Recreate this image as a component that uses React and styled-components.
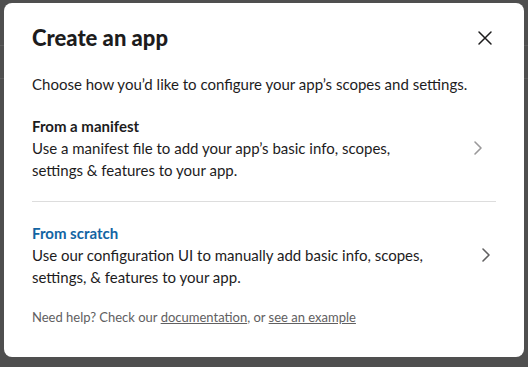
import React from "react";
import styled, { createGlobalStyle } from "styled-components";

const GlobalStyle = createGlobalStyle`
  html, body {
    margin: 0;
    padding: 0;
    background: #4f4f4f;
  }
  body {
    font-family: Lato, "Noto Sans", sans-serif;
    color: #1d1c1d;
    -webkit-font-smoothing: antialiased;
  }
`;

const Page = styled.div`
  position: relative;
  width: 528px;
  height: 367px;
  overflow: hidden;
  background: #4f4f4f;
`;

const PageBand = styled.div`
  height: ${(p) => p.h}px;
  border-bottom: 1px solid #5d5d5d;
`;

const Modal = styled.div`
  position: absolute;
  left: 4px;
  top: 3px;
  width: 520px;
  height: 354px;
  box-sizing: border-box;
  background: #fff;
  border-radius: 8px;
  padding: 20px 28px 0 28px;
  display: flex;
  flex-direction: column;
`;

const Header = styled.div`
  display: flex;
  align-items: center;
  justify-content: space-between;
`;

const Title = styled.h1`
  margin: 0;
  font-size: 22px;
  line-height: 30px;
  font-weight: 900;
  color: #1d1c1d;
`;

const CloseButton = styled.button`
  border: none;
  background: none;
  padding: 0;
  margin-right: 3px;
  width: 16px;
  height: 16px;
  display: flex;
  align-items: center;
  justify-content: center;
  color: #1d1c1d;
  cursor: pointer;
`;

const Intro = styled.p`
  margin: 20px 0 0 0;
  font-size: 15px;
  line-height: 22px;
`;

const Option = styled.div`
  display: flex;
  align-items: center;
  padding: 20px 0;
  border-bottom: ${(p) => (p.divider ? "1px solid #dddddd" : "none")};
  cursor: pointer;
`;

const OptionText = styled.div`
  flex: 1;
  font-size: 15px;
  line-height: 22px;
`;

const OptionTitle = styled.div`
  font-weight: 700;
  color: ${(p) => (p.active ? "#1264a3" : "#1d1c1d")};
`;

const Chevron = styled.div`
  width: 56px;
  display: flex;
  justify-content: flex-end;
  padding-right: ${(p) => (p.active ? 5 : 13)}px;
  box-sizing: border-box;
  color: ${(p) => (p.active ? "#616061" : "#9a999a")};
`;

const Footer = styled.p`
  margin: 0;
  font-size: 13px;
  line-height: 18px;
  color: #616061;
`;

const FooterLink = styled.a`
  color: #616061;
  text-decoration: underline;
`;

const ChevronIcon = () => (
  <svg width="10" height="16" viewBox="0 0 10 16" fill="none">
    <polyline
      points="2,2 8,8 2,14"
      stroke="currentColor"
      strokeWidth="1.6"
      strokeLinecap="round"
      strokeLinejoin="round"
    />
  </svg>
);

const CloseIcon = () => (
  <svg width="16" height="16" viewBox="0 0 16 16" fill="none">
    <path
      d="M2 2 L14 14 M14 2 L2 14"
      stroke="currentColor"
      strokeWidth="1.5"
      strokeLinecap="round"
    />
  </svg>
);

const options = [
  {
    title: "From a manifest",
    text: "Use a manifest file to add your app’s basic info, scopes, settings & features to your app.",
    active: false,
  },
  {
    title: "From scratch",
    text: "Use our configuration UI to manually add basic info, scopes, settings, & features to your app.",
    active: true,
  },
];

export default function App() {
  return (
    <Page>
      <GlobalStyle />
      <PageBand h={45} />
      <PageBand h={32} />
      <Modal>
        <Header>
          <Title>Create an app</Title>
          <CloseButton aria-label="Close">
            <CloseIcon />
          </CloseButton>
        </Header>
        <Intro>Choose how you’d like to configure your app’s scopes and settings.</Intro>
        {options.map((o, i) => (
          <Option key={o.title} divider={i === 0}>
            <OptionText>
              <OptionTitle active={o.active}>{o.title}</OptionTitle>
              {o.text}
            </OptionText>
            <Chevron active={o.active}>
              <ChevronIcon />
            </Chevron>
          </Option>
        ))}
        <Footer>
          Need help? Check our <FooterLink href="#">documentation</FooterLink>, or{" "}
          <FooterLink href="#">see an example</FooterLink>
        </Footer>
      </Modal>
    </Page>
  );
}
